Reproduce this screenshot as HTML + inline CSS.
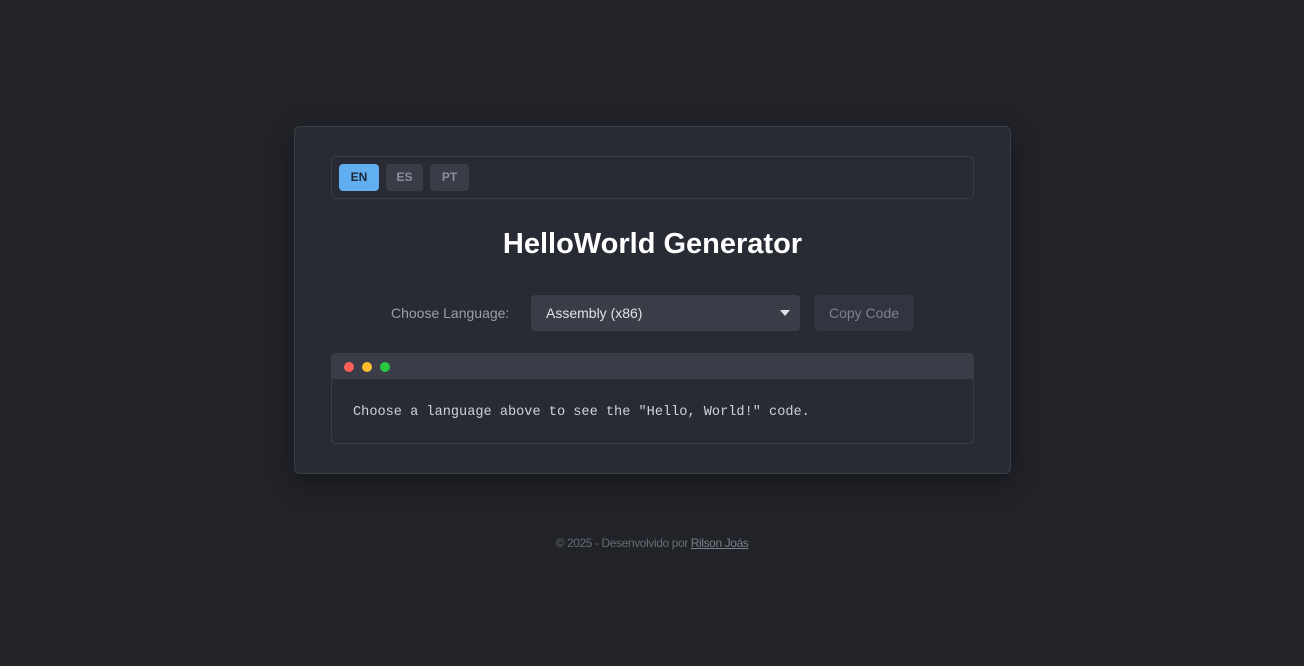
<!DOCTYPE html>
<html><head><meta charset="utf-8"><style>
*{box-sizing:border-box;margin:0;padding:0}
body{width:1304px;height:666px;background:#212329;font-family:"Liberation Sans",sans-serif;position:relative;overflow:hidden}
.card{position:absolute;left:294px;top:126px;width:717px;height:348px;background:#282b34;border:1px solid #3b3e48;border-radius:6px;box-shadow:0 8px 24px rgba(0,0,0,.35)}
.bar{position:absolute;left:36px;top:29px;width:643px;height:43px;border:1px solid #3b3e48;border-radius:5px}
.b{position:absolute;top:7px;height:27px;border-radius:4px;font-size:12px;font-weight:bold;color:#8c909a;background:#3a3d48;text-align:center;line-height:27px}
h1{position:absolute;left:0;right:0;top:101px;text-align:center;color:#fff;font-size:29px;font-weight:bold}
.lab{position:absolute;left:96px;top:178px;color:#9a9ea8;font-size:14px}
.sel{position:absolute;left:236px;top:168px;width:269px;height:36px;background:#3a3d48;border-radius:4px;color:#dfe1e6;font-size:14px;line-height:36px;padding-left:15px}
.sel:after{content:"";position:absolute;right:10px;top:15px;border-left:5px solid transparent;border-right:5px solid transparent;border-top:6px solid #dfe1e6}
.copy{position:absolute;left:519px;top:168px;width:100px;height:36px;background:#323540;border-radius:4px;color:#7c808a;font-size:14px;line-height:36px;text-align:center}
.code{position:absolute;left:36px;top:226px;width:643px;height:91px;border:1px solid #3b3e48;border-radius:5px;overflow:hidden}
.ch{height:26px;background:#3a3d48;border-bottom:1px solid #2c2f38;position:relative}
.d{position:absolute;top:8px;width:10px;height:10px;border-radius:50%}
.ct{position:absolute;left:21px;top:51px;font-family:"Liberation Mono",monospace;font-size:13.6px;color:#cfd2d8}
.foot{position:absolute;left:0;right:0;top:536px;text-align:center;font-size:12px;color:#666a73;letter-spacing:-0.4px}
.foot u{color:#7a7e87}
</style></head><body>
<div class="card">
<div class="bar">
<div class="b" style="left:7px;width:40px;background:#61aff0;color:#1c2733">EN</div>
<div class="b" style="left:54px;width:37px">ES</div>
<div class="b" style="left:98px;width:39px">PT</div>
</div>
<h1>HelloWorld Generator</h1>
<div class="lab">Choose Language:</div>
<div class="sel">Assembly (x86)</div>
<div class="copy">Copy Code</div>
<div class="code"><div class="ch"><span class="d" style="left:12px;background:#fe5f57"></span><span class="d" style="left:30px;background:#febc2e"></span><span class="d" style="left:48px;background:#28c840"></span></div>
<div class="ct">Choose a language above to see the "Hello, World!" code.</div></div>
</div>
<div class="foot">© 2025 - Desenvolvido por <u>Rilson Joás</u></div>
</body></html>
